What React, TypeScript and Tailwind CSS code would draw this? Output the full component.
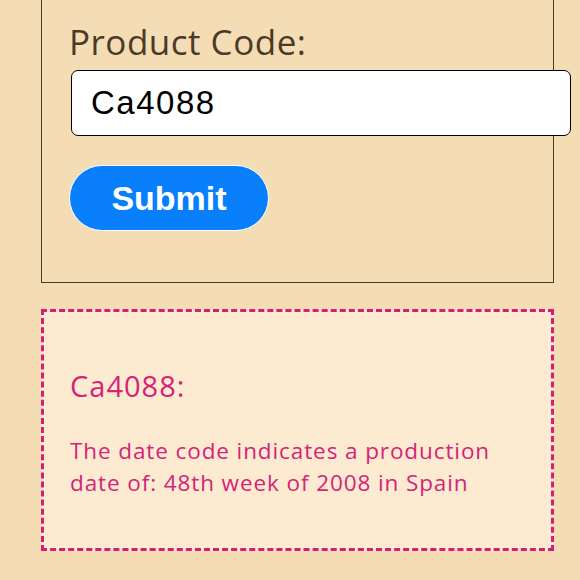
export default function App() {
  return (
    <div className="w-[580px] h-[580px] overflow-hidden bg-[#f4ddb4] pl-[41px]" style={{ fontFamily: '"Open Sans", "Noto Sans", sans-serif' }}>
      <div className="w-[513px] border border-t-0 border-[#4a3a28] pl-[27px] pt-[19px] pb-[51px]">
        <label className="block text-[35px] leading-[46px] tracking-[0.5px] text-[#4a3a28]">Product Code:</label>
        <div className="mt-[5px] w-[500px] h-[66px] ml-[2px] rounded-[7px] border-[1.5px] border-black bg-white flex items-center pl-[19px]">
          <span className="text-[33px] tracking-[1.5px] text-black" style={{ fontFamily: '"Liberation Sans", Arial, sans-serif' }}>Ca4088</span>
        </div>
        <button className="mt-[29px] w-[200px] h-[66px] rounded-full bg-[#0a7ffb] border border-white text-white text-[34px] font-bold flex items-center justify-center" style={{ fontFamily: '"Liberation Sans", Arial, sans-serif' }}>
          Submit
        </button>
      </div>
      <div className="mt-[26px] w-[513px] h-[242px] border-[3px] border-dashed border-[#d81d78] bg-[#fdebd1] pl-[26px] pt-[55px] text-[#d4247a]">
        <div className="text-[29px] leading-[38px] tracking-[1px]">Ca4088:</div>
        <p className="mt-[30px] text-[22.5px] leading-[32px] tracking-[0.9px] pr-[30px]">
          The date code indicates a production date of: 48th week of 2008 in Spain
        </p>
      </div>
    </div>
  );
}
